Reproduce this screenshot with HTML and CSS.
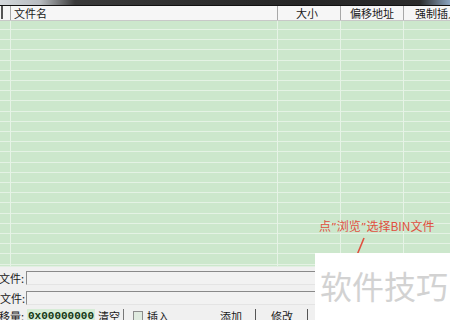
FILE: index.html
```html
<!DOCTYPE html>
<html lang="zh-CN">
<head>
  <meta charset="UTF-8">
  <title>BIN文件列表</title>
  <link rel="stylesheet" href="styles.css">
</head>
<body>
  <div class="titlebar"></div>

  <div class="list">
    <div class="list-head">
      <div class="col c0"><span class="grip"></span></div>
      <div class="col c1">文件名</div>
      <div class="col c2 center">大小</div>
      <div class="col c3 center">偏移地址</div>
      <div class="col c4">强制插入</div>
    </div>
    <div class="list-body">
      <div class="col c0"></div>
      <div class="col c1"></div>
      <div class="col c2"></div>
      <div class="col c3"></div>
      <div class="col c4"></div>
    </div>
  </div>

  <div class="panel">
    <div class="field">
      <div class="label">BIN文件:</div>
      <div class="input"></div>
    </div>
    <div class="field">
      <div class="label label-r">源文件:</div>
      <div class="input"></div>
    </div>
    <div class="field tools">
      <div class="label">偏移量:</div>
      <div class="hex">0x00000000</div>
      <div class="clear">清空</div>
      <div class="check"><span class="box"></span>插入</div>
      <div class="btn add">添加</div>
      <div class="btn edit">修改</div>
    </div>
  </div>

  <div class="note">点<span class="q">”</span>浏览<span class="q">”</span>选择BIN文件</div>
  <svg class="pointer" width="14" height="20" viewBox="0 0 14 20">
    <path d="M11 1 L4 18" stroke="#e0503f" stroke-width="1.6" fill="none"/>
  </svg>

  <div class="watermark">软件技巧</div>
</body>
</html>
```

FILE: styles.css
```css
body {
  margin: 0;
  width: 450px;
  height: 320px;
  overflow: hidden;
  position: relative;
  background: #f0f0f0;
  font-family: "Noto Sans CJK SC", "DejaVu Sans", sans-serif;
  font-size: 11px;
  color: #1a1a1a;
}
.titlebar {
  height: 5px;
  background: linear-gradient(to right, #d4d8dc 0, #b8bcc0 40px, #3a3a3a 75px, #262626 300px, #2c2c2c 420px, #8aa4c0 450px);
  border-bottom: 1px solid #111;
}
.list-head {
  display: flex;
  height: 14px;
  background: #f6f6f6;
  border-bottom: 1px solid #c8c8c8;
  line-height: 15px;
}
.col {
  flex: none;
  box-sizing: border-box;
  border-right: 1px solid #a8a8a8;
  white-space: nowrap;
}
.list-head .col {
  height: 14px;
}
.center {
  text-align: center;
}
.c0 {
  width: 11px;
}
.grip {
  display: block;
  width: 2px;
  height: 13px;
  margin-left: 1px;
  background: #555;
}
.c1 {
  width: 267px;
  padding-left: 3px;
}
.c2 {
  width: 63px;
  padding-right: 4px;
}
.c3 {
  width: 63px;
}
.c4 {
  width: 60px;
  padding-left: 11px;
  border-right: none;
}
.list-body {
  display: flex;
  height: 245px;
  background-color: #cce7cc;
  background-image: repeating-linear-gradient(to bottom, #e4f2e4 0, #e4f2e4 1px, transparent 1px, transparent 10.2px);
  background-position: 0 8px;
  border-bottom: 1px solid #e2efe2;
}
.list-body .col {
  height: 100%;
  border-right: 1px solid #e6f3e6;
}
.list-body .c4 {
  border-right: none;
}
.panel {
  padding-top: 4px;
  display: flex;
  flex-direction: column;
  gap: 6px;
}
.field {
  display: flex;
  align-items: center;
  height: 14px;
}
.label {
  width: 24px;
  flex: none;
  display: flex;
  justify-content: flex-end;
  overflow: hidden;
  white-space: nowrap;
  line-height: 14px;
}
.label-r {
  width: 25px;
}
.input {
  flex: none;
  margin-left: 2px;
  width: 300px;
  height: 14px;
  box-sizing: border-box;
  background: #f2f2f2;
  border-top: 1px solid #8a8a8a;
  border-left: 1px solid #8a8a8a;
  border-bottom: 1px solid #e4e4e4;
  border-right: 1px solid #e4e4e4;
}
.label-r + .input {
  margin-left: 1px;
}
.tools {
  margin-top: -2px;
}
.hex {
  margin-left: 3px;
  padding: 0 1px;
  background: #d6ecd6;
  font-family: "Liberation Mono", monospace;
  font-weight: bold;
  font-size: 11px;
  color: #143814;
  line-height: 14px;
}
.clear {
  margin-left: 3px;
  padding-right: 3px;
  border-right: 1px solid #777;
  height: 14px;
  line-height: 14px;
}
.check {
  display: flex;
  align-items: center;
  margin-left: 9px;
  gap: 4px;
}
.box {
  width: 8px;
  height: 8px;
  border: 1px solid #8c8c8c;
  background: #dfeadf;
}
.btn {
  height: 14px;
  line-height: 14px;
  border-right: 1px solid #555;
  text-align: center;
  box-sizing: border-box;
}
.add {
  margin-left: 38px;
  width: 49px;
}
.edit {
  margin-left: 1px;
  width: 51px;
}
.note {
  position: absolute;
  left: 319px;
  top: 217px;
  font-size: 12px;
  color: #e0503f;
  white-space: nowrap;
}
.q {
  font-family: "DejaVu Sans", sans-serif;
  font-size: 11px;
}
.pointer {
  position: absolute;
  left: 353px;
  top: 237px;
}
.watermark {
  position: absolute;
  left: 315px;
  top: 253px;
  right: 0;
  bottom: 0;
  background: #fff;
  color: #d2d2d2;
  font-size: 32px;
  line-height: 1;
  padding: 16px 0 0 5px;
  white-space: nowrap;
}
```
